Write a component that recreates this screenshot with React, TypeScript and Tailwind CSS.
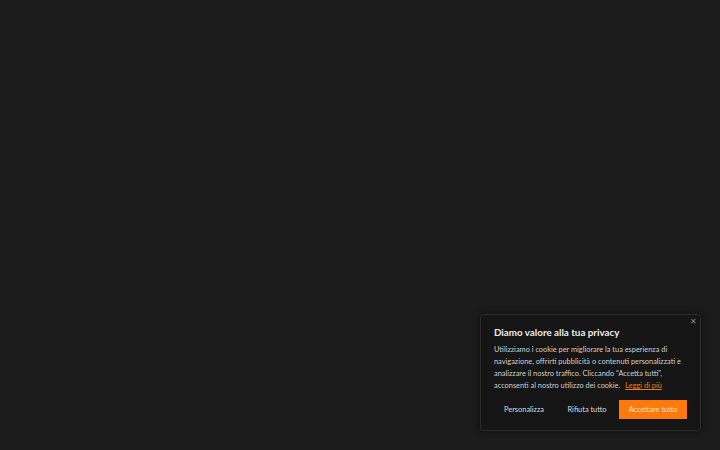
export default function App() {
  return (
    <div className="relative h-[450px] w-[720px] overflow-hidden bg-[#1b1b1b] font-['Lato',sans-serif]">
      <div className="absolute left-[480px] top-[314px] w-[221px] rounded-[4px] border border-[#2c2c2c] bg-[#151515] px-[13px] pb-[11px] pt-[11px] shadow-[0_0_6px_rgba(0,0,0,0.5)]">
        <button className="absolute right-[3px] top-[2px] text-[8px] leading-none text-[#8a8a8a]">✕</button>
        <h2 className="text-[9.8px] font-bold leading-[13px] text-[#ececec]">Diamo valore alla tua privacy</h2>
        <p className="mt-[5px] text-[7.4px] leading-[12px] text-[#cfcfcf]">
          Utilizziamo i cookie per migliorare la tua esperienza di navigazione, offrirti pubblicità o contenuti personalizzati e analizzare il nostro traffico. Cliccando "Accetta tutti", acconsenti al nostro utilizzo dei cookie.
          <a className="ml-[5px] inline-block text-[#f47a1f] underline">Leggi di più</a>
        </p>
        <div className="mt-[8px] flex items-center">
          <button className="w-[60px] text-[7.4px] text-[#dcdcdc]">Personalizza</button>
          <button className="ml-[3px] w-[60px] text-[7.4px] text-[#dcdcdc]">Rifiuta tutto</button>
          <button className="ml-auto h-[19px] w-[68px] bg-[#ff7a0a] text-[7.4px] text-[#ffe2c8]">Accettare tutto</button>
        </div>
      </div>
    </div>
  );
}
